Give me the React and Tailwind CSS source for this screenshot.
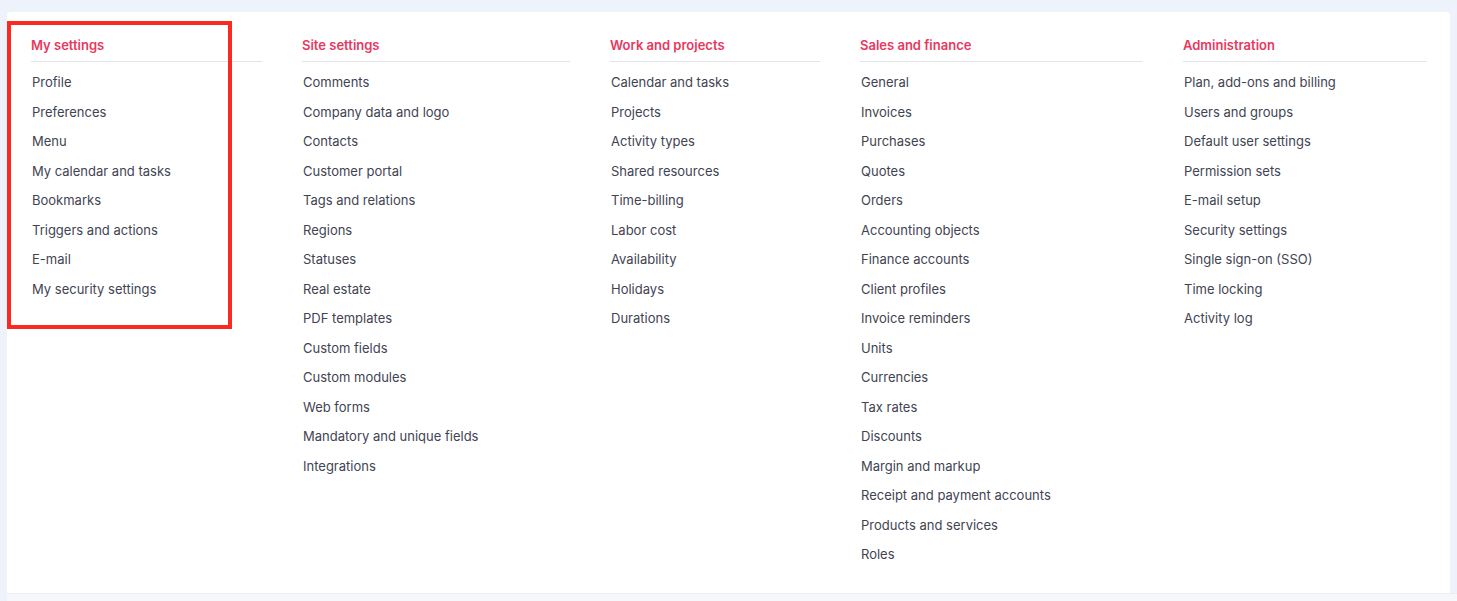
const sections = [
  {
    title: "My settings",
    width: "w-[231px]",
    items: ["Profile", "Preferences", "Menu", "My calendar and tasks", "Bookmarks", "Triggers and actions", "E-mail", "My security settings"],
  },
  {
    title: "Site settings",
    width: "w-[268px]",
    items: [
      "Comments", "Company data and logo", "Contacts", "Customer portal", "Tags and relations", "Regions", "Statuses",
      "Real estate", "PDF templates", "Custom fields", "Custom modules", "Web forms", "Mandatory and unique fields", "Integrations",
    ],
  },
  {
    title: "Work and projects",
    width: "w-[210px]",
    items: ["Calendar and tasks", "Projects", "Activity types", "Shared resources", "Time-billing", "Labor cost", "Availability", "Holidays", "Durations"],
  },
  {
    title: "Sales and finance",
    width: "w-[283px]",
    items: [
      "General", "Invoices", "Purchases", "Quotes", "Orders", "Accounting objects", "Finance accounts", "Client profiles",
      "Invoice reminders", "Units", "Currencies", "Tax rates", "Discounts", "Margin and markup", "Receipt and payment accounts",
      "Products and services", "Roles",
    ],
  },
  {
    title: "Administration",
    width: "w-[244px]",
    items: ["Plan, add-ons and billing", "Users and groups", "Default user settings", "Permission sets", "E-mail setup", "Security settings", "Single sign-on (SSO)", "Time locking", "Activity log"],
  },
];

function Section({ section }) {
  return (
    <div className={section.width}>
      <h3 className="text-[13px] leading-5 font-semibold text-[#e8385e] pb-[6px] border-b border-[#e3e3ec]">{section.title}</h3>
      <ul className="mt-[6px]">
        {section.items.map((item) => (
          <li key={item} className="pl-px text-[13px] leading-[29.5px] text-[#3f4452] cursor-pointer hover:text-[#e8385e]">{item}</li>
        ))}
      </ul>
    </div>
  );
}

export default function App() {
  return (
    <div className="min-h-[601px] bg-[#eef2fa] pt-3 pl-[7px] pr-[7px] font-['Inter','Liberation_Sans',sans-serif] relative">
      <div className="bg-white rounded-t-[4px] h-[581px] pt-[23px] pl-6 flex gap-10">
        {sections.map((s) => <Section key={s.title} section={s} />)}
      </div>
      <div className="h-2 -mr-[7px] bg-[#f6f7fb] border-t border-[#eceef5]" />
      <div className="absolute left-[7px] top-[21px] w-[225px] h-[308px] border-4 border-[#fb2a21] pointer-events-none" />
    </div>
  );
}
